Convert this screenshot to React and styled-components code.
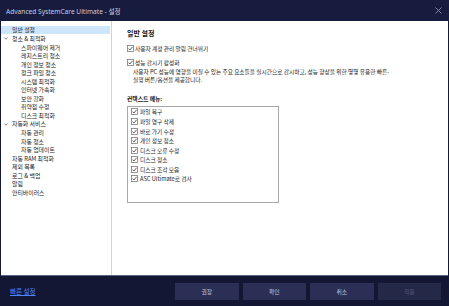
import React from "react";
import styled, { createGlobalStyle } from "styled-components";

const Global = createGlobalStyle`
  html, body { margin: 0; padding: 0; background: #151938; }
  body { font-family: "Noto Sans", "Noto Sans CJK KR", sans-serif; }
  * { box-sizing: border-box; }
`;

const Window = styled.div`
  width: 449px;
  height: 306px;
  display: flex;
  flex-direction: column;
  background: #151938;
  overflow: hidden;
`;

const TitleBar = styled.div`
  height: 21px;
  flex: none;
  display: flex;
  align-items: center;
  justify-content: space-between;
  padding: 0 6px 0 6px;
  background: #171b3d;
`;

const Title = styled.div`
  font-family: "Noto Sans", "Noto Sans CJK KR", sans-serif;
  font-size: 6.6px;
  color: #c9cde2;
`;

const Close = styled.div`
  width: 7px;
  height: 7px;
  display: flex;
  margin-right: 1px;
`;

const Body = styled.div`
  flex: none;
  height: 255px;
  margin: 0 1px;
  background: #ffffff;
  border-bottom: 1px solid #5e6288;
  display: flex;
`;

const Sidebar = styled.div`
  width: 111px;
  flex: none;
  border-right: 1px solid #d3d3d3;
  padding-top: 4.7px;
  display: flex;
  flex-direction: column;
`;

const TreeRow = styled.div`
  height: 8.55px;
  display: flex;
  align-items: center;
  margin-right: 1px;
  padding-left: ${(p) => (p.$level === 1 ? 20 : 11)}px;
  background: ${(p) => (p.$selected ? "#cde6fb" : "transparent")};
  font-family: "Noto Sans CJK KR", sans-serif;
  font-size: 5.9px;
  color: #222;
  white-space: nowrap;
  position: relative;
`;

const Chevron = styled.svg`
  position: absolute;
  left: 3px;
  top: 3px;
`;

const Main = styled.div`
  flex: 1;
  padding: 7px 0 0 15px;
  display: flex;
  flex-direction: column;
`;

const Heading = styled.div`
  height: 10px;
  display: flex;
  align-items: center;
  font-family: "Noto Sans CJK KR", sans-serif;
  font-size: 7px;
  font-weight: 700;
  color: #111;
`;

const CheckRow = styled.div`
  height: 8px;
  margin-top: ${(p) => p.$mt || 0}px;
  display: flex;
  align-items: center;
  gap: 1px;
  font-family: "Noto Sans CJK KR", sans-serif;
  font-size: 5.7px;
  color: #1a1a1a;
  white-space: nowrap;
`;

const Desc = styled.div`
  margin-top: 1.75px;
  padding-left: 6px;
  font-family: "Noto Sans CJK KR", sans-serif;
  font-size: 5.7px;
  line-height: 8.5px;
  color: #1a1a1a;
  white-space: nowrap;
`;

const Label = styled.div`
  height: 8px;
  margin-top: 9.25px;
  display: flex;
  align-items: center;
  font-family: "Noto Sans CJK KR", sans-serif;
  font-size: 5.8px;
  font-weight: 700;
  color: #111;
`;

const ListBox = styled.div`
  margin-top: 4px;
  width: 152px;
  height: 97px;
  border: 1px solid #a8a8a8;
  padding: 0.2px 0 0 3px;
  display: flex;
  flex-direction: column;
`;

const ListItem = styled.div`
  height: 9.57px;
  display: flex;
  align-items: center;
  gap: 2px;
  font-family: "Noto Sans CJK KR", sans-serif;
  font-size: 5.7px;
  color: #1a1a1a;
  white-space: nowrap;
`;

const Footer = styled.div`
  flex: 1;
  display: flex;
  align-items: center;
  padding: 0 8px 0 10px;
  background: #131734;
`;

const Link = styled.a`
  font-family: "Noto Sans CJK KR", sans-serif;
  font-size: 6.5px;
  color: #4d86ff;
  text-decoration: underline;
  margin-right: auto;
  cursor: pointer;
`;

const Buttons = styled.div`
  display: flex;
  gap: 4px;
`;

const Button = styled.button`
  width: 63.5px;
  height: 17px;
  border: none;
  padding: 0;
  background: ${(p) => (p.$disabled ? "#252948" : "#2b2f55")};
  color: ${(p) => (p.$disabled ? "#50557a" : "#c3c7dc")};
  font-family: "Noto Sans CJK KR", sans-serif;
  font-size: 5.8px;
  display: flex;
  align-items: center;
  justify-content: center;
`;

const Box = () => (
  <svg width="7" height="7" viewBox="0 0 7 7" style={{ flex: "none" }}>
    <rect x="0.5" y="0.5" width="6" height="6" fill="#fff" stroke="#7a7a7a" strokeWidth="0.8" />
    <path d="M1.5 3.6 L2.9 5 L5.6 1.8" fill="none" stroke="#333" strokeWidth="0.8" />
  </svg>
);

const tree = [
  { t: "일반 설정", l: 0, sel: true },
  { t: "청소 & 최적화", l: 0, exp: true },
  { t: "스파이웨어 제거", l: 1 },
  { t: "레지스트리 청소", l: 1 },
  { t: "개인 정보 청소", l: 1 },
  { t: "정크 파일 청소", l: 1 },
  { t: "시스템 최적화", l: 1 },
  { t: "인터넷 가속화", l: 1 },
  { t: "보안 강화", l: 1 },
  { t: "취약점 수정", l: 1 },
  { t: "디스크 최적화", l: 1 },
  { t: "자동화 서비스", l: 0, exp: true },
  { t: "자동 관리", l: 1 },
  { t: "자동 청소", l: 1 },
  { t: "자동 업데이트", l: 1 },
  { t: "자동 RAM 최적화", l: 0 },
  { t: "제외 목록", l: 0 },
  { t: "로그 & 백업", l: 0 },
  { t: "알림", l: 0 },
  { t: "안티바이러스", l: 0 },
];

const menu = [
  "파일 복구",
  "파일 영구 삭제",
  "바로 가기 수정",
  "개인 정보 청소",
  "디스크 오류 수정",
  "디스크 청소",
  "디스크 조각 모음",
  "ASC Ultimate로 검사",
];

export default function App() {
  return (
    <>
      <Global />
      <Window>
        <TitleBar>
          <Title>Advanced SystemCare Ultimate - 설정</Title>
          <Close>
            <svg width="7" height="7" viewBox="0 0 7 7">
              <path d="M0.5 0.5 L6.5 6.5 M6.5 0.5 L0.5 6.5" stroke="#8e93b3" strokeWidth="0.9" />
            </svg>
          </Close>
        </TitleBar>
        <Body>
          <Sidebar>
            {tree.map((n, i) => (
              <TreeRow key={i} $level={n.l} $selected={n.sel}>
                {n.exp && (
                  <Chevron width="4" height="3" viewBox="0 0 4 3">
                    <path d="M0.3 0.5 L2 2.3 L3.7 0.5" fill="none" stroke="#555" strokeWidth="0.7" />
                  </Chevron>
                )}
                {n.t}
              </TreeRow>
            ))}
          </Sidebar>
          <Main>
            <Heading>일반 설정</Heading>
            <CheckRow $mt={6}>
              <Box />
              사용자 계정 관리 알림 건너뛰기
            </CheckRow>
            <CheckRow $mt={6}>
              <Box />
              성능 감시기 활성화
            </CheckRow>
            <Desc>
              사용자 PC 성능에 영향을 미칠 수 있는 주요 요소들을 실시간으로 감시하고, 성능 향상을 위한 몇몇 유용한 빠른-
              <br />
              실행 버튼/옵션을 제공합니다.
            </Desc>
            <Label>컨텍스트 메뉴:</Label>
            <ListBox>
              {menu.map((m) => (
                <ListItem key={m}>
                  <Box />
                  {m}
                </ListItem>
              ))}
            </ListBox>
          </Main>
        </Body>
        <Footer>
          <Link>빠른 설정</Link>
          <Buttons>
            <Button>권장</Button>
            <Button>확인</Button>
            <Button>취소</Button>
            <Button $disabled>적용</Button>
          </Buttons>
        </Footer>
      </Window>
    </>
  );
}
